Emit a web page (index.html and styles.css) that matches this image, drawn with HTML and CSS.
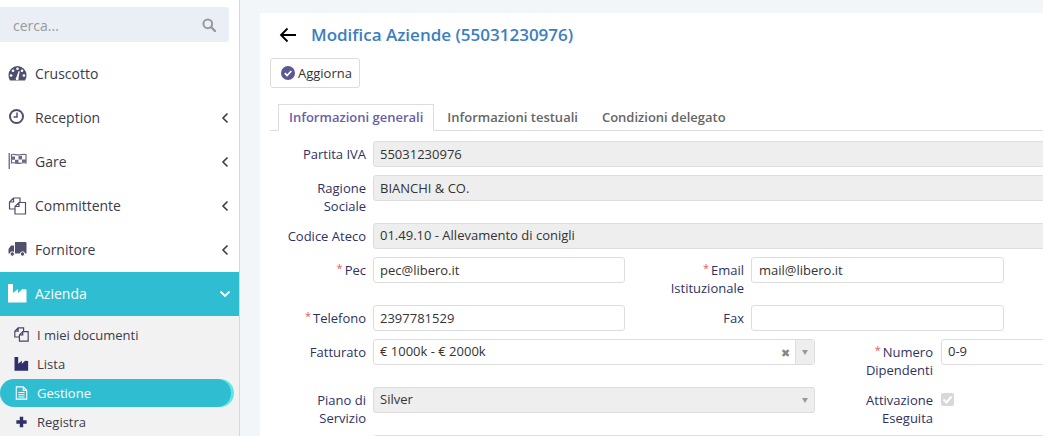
FILE: index.html
```html
<!DOCTYPE html>
<html lang="it">
<head>
<meta charset="utf-8">
<title>Modifica Aziende</title>
<link rel="stylesheet" href="styles.css">
</head>
<body>
<aside class="sidebar">
  <div class="search">
    <span class="search-text">cerca...</span>
    <svg class="search-icon" viewBox="0 0 14 14" width="14" height="14"><circle cx="5.800" cy="5.800" r="4.400" fill="none" stroke="currentColor" stroke-width="2"/><path d="M9 9l4 4" stroke="currentColor" stroke-width="2.400" stroke-linecap="round"/></svg>
  </div>
  <nav class="menu">
    <div class="item">
      <svg class="icon" viewBox="0 0 18 15" width="18" height="15"><path fill="currentColor" d="M9 0a9 9 0 0 0-9 9c0 2.200.5 4 1.500 5.500h15A9 9 0 0 0 18 9a9 9 0 0 0-9-9z"/><g fill="#fff"><circle cx="9" cy="2.800" r="1.300"/><circle cx="4.500" cy="4.800" r="1.300"/><circle cx="13.500" cy="4.800" r="1.300"/><circle cx="2.600" cy="9.500" r="1.300"/><circle cx="15.400" cy="9.500" r="1.300"/><path d="M7.800 11.500l2.400-6.500 1 .4L10 12A1.500 1.500 0 1 1 7.800 11.500z"/></g></svg>
      <span class="item-text">Cruscotto</span>
    </div>
    <div class="item">
      <svg class="icon" viewBox="0 0 18 17" width="18" height="17"><circle cx="8" cy="7.500" r="6.500" fill="none" stroke="currentColor" stroke-width="2"/><path d="M8.500 3.500v4.500H5" fill="none" stroke="currentColor" stroke-width="1.500"/></svg>
      <span class="item-text">Reception</span>
      <svg class="chev" viewBox="0 0 8 12" width="8" height="12"><path d="M6.500 1.500L2 6l4.500 4.500" fill="none" stroke="currentColor" stroke-width="1.600"/></svg>
    </div>
    <div class="item">
      <svg class="icon icon-flag" viewBox="0 0 18 16" width="18" height="16"><path fill="#7a7a98" d="M0 0h1.500v16H0z"/><path d="M3 1.500c3-1 5 1 8 .3s4-.8 6.500-.3v8.500c-2.500-.5-4-.3-6.500.3s-5-1.300-8-.3z" fill="#fff" stroke="currentColor" stroke-width="1.200"/><path fill="currentColor" d="M3 3.500h3.500v3.200H3zM6.500 6.700H10v3.200H6.500zM10 3h3.500v3.500H10zM13.500 6.500h4v3h-4z"/></svg>
      <span class="item-text">Gare</span>
      <svg class="chev" viewBox="0 0 8 12" width="8" height="12"><path d="M6.500 1.500L2 6l4.500 4.500" fill="none" stroke="currentColor" stroke-width="1.600"/></svg>
    </div>
    <div class="item">
      <svg class="icon" viewBox="0 0 18 18" width="18" height="18"><path d="M6.500 12H1V5L5 1H11.500V5.500M6.500 17V9.500L10.500 5.500H17V17zM10.500 6V9.500H7M5 1.500V5H1.500" fill="none" stroke="currentColor" stroke-width="1.200"/></svg>
      <span class="item-text">Committente</span>
      <svg class="chev" viewBox="0 0 8 12" width="8" height="12"><path d="M6.500 1.500L2 6l4.500 4.500" fill="none" stroke="currentColor" stroke-width="1.600"/></svg>
    </div>
    <div class="item">
      <svg class="icon" viewBox="0 0 18 15" width="18" height="15"><path fill="currentColor" d="M6.500 0H17a1 1 0 0 1 1 1v10.500H6.500zM0 7l2.500-3.500h3V11.500H0z"/><circle cx="3.800" cy="12" r="2.200" fill="currentColor" stroke="#fff"/><circle cx="14" cy="12" r="2.200" fill="currentColor" stroke="#fff"/></svg>
      <span class="item-text">Fornitore</span>
      <svg class="chev" viewBox="0 0 8 12" width="8" height="12"><path d="M6.500 1.500L2 6l4.500 4.500" fill="none" stroke="currentColor" stroke-width="1.600"/></svg>
    </div>
    <div class="item item-active">
      <svg class="icon" viewBox="0 0 19 19" width="19" height="19"><path fill="currentColor" d="M0 0h5v9l5-4v4l4.500-4 4 .5V18.500H0z"/></svg>
      <span class="item-text">Azienda</span>
      <svg class="chev chev-down" viewBox="0 0 12 8" width="12" height="8"><path d="M1.500 1.500L6 6l4.500-4.500" fill="none" stroke="currentColor" stroke-width="1.800"/></svg>
    </div>
    <div class="submenu">
      <div class="sub">
        <svg class="sub-icon" viewBox="0 0 18 18" width="15" height="15"><path d="M6.500 12H1V5L5 1H11.500V5.500M6.500 17V9.500L10.500 5.500H17V17zM10.500 6V9.500H7M5 1.500V5H1.500" fill="none" stroke="currentColor" stroke-width="1.400"/></svg>
        <span>I miei documenti</span>
      </div>
      <div class="sub">
        <svg class="sub-icon sub-dark" viewBox="0 0 19 19" width="15" height="14"><path fill="currentColor" d="M0 0h5v9l5-4v4l4.500-4 4 .5V18.500H0z"/></svg>
        <span>Lista</span>
      </div>
      <div class="sub sub-active">
        <svg class="sub-icon" viewBox="0 0 14 16" width="13" height="14"><path d="M1 1h8l4 4v10H1zM9 1v4h4M3.500 7.500h7M3.500 10h7M3.500 12.500h7" fill="none" stroke="currentColor" stroke-width="1.200"/></svg>
        <span>Gestione</span>
      </div>
      <div class="sub">
        <svg class="sub-icon sub-dark" viewBox="0 0 14 14" width="12" height="12"><path fill="currentColor" d="M5 1h4v4h4v4H9v4H5V9H1V5h4z"/></svg>
        <span>Registra</span>
      </div>
    </div>
  </nav>
</aside>

<main class="main">
  <section class="card">
    <header class="head">
      <svg class="back" viewBox="0 0 18 16" width="18" height="16"><path d="M17 8H2M8.500 1.500L2 8l6.500 6.500" fill="none" stroke="#000" stroke-width="1.800"/></svg>
      <h1 class="title">Modifica Aziende (55031230976)</h1>
    </header>
    <button class="btn" type="button">
      <svg viewBox="0 0 14 14" width="14" height="14"><circle cx="7" cy="7" r="7" fill="#5b5794"/><path d="M3.800 7.200l2.300 2.300 4.200-4.500" fill="none" stroke="#fff" stroke-width="1.800"/></svg>
      Aggiorna
    </button>
    <div class="tabs">
      <span class="tab tab-active">Informazioni generali</span>
      <span class="tab">Informazioni testuali</span>
      <span class="tab">Condizioni delegato</span>
    </div>
    <div class="form">
      <div class="row">
        <label class="label">Partita IVA</label>
        <div class="input input-full disabled">55031230976</div>
      </div>
      <div class="row">
        <label class="label">Ragione Sociale</label>
        <div class="input input-full disabled">BIANCHI &amp; CO.</div>
      </div>
      <div class="row">
        <label class="label">Codice Ateco</label>
        <div class="input input-full input-tight disabled">01.49.10 - Allevamento di conigli</div>
      </div>
      <div class="row">
        <label class="label"><span class="req">*</span>Pec</label>
        <div class="input input-half">pec@libero.it</div>
        <label class="label label-second"><span class="req">*</span>Email Istituzionale</label>
        <div class="input input-second">mail@libero.it</div>
      </div>
      <div class="row">
        <label class="label"><span class="req">*</span>Telefono</label>
        <div class="input input-half">2397781529</div>
        <label class="label label-second">Fax</label>
        <div class="input input-second"></div>
      </div>
      <div class="row">
        <label class="label">Fatturato</label>
        <div class="input input-tight select">
          <span class="select-value">€ 1000k - € 2000k</span>
          <span class="clear">✖</span>
          <span class="caret-box"><span class="caret"></span></span>
        </div>
        <label class="label label-third"><span class="req">*</span>Numero Dipendenti</label>
        <div class="input input-tight input-end">0-9</div>
      </div>
      <div class="row">
        <label class="label">Piano di Servizio</label>
        <div class="input input-tight select disabled">
          <span class="select-value">Silver</span>
          <span class="caret-box caret-plain"><span class="caret"></span></span>
        </div>
        <label class="label label-third">Attivazione Eseguita</label>
        <span class="check"><svg viewBox="0 0 13 13" width="13" height="13"><path d="M2.500 6.500l3 3 5-6" fill="none" stroke="#fff" stroke-width="2"/></svg></span>
      </div>
      <div class="row">
        <label class="label"></label>
        <div class="input input-full"></div>
      </div>
    </div>
  </section>
</main>
</body>
</html>
```

FILE: styles.css
```css
* { box-sizing: border-box; }
html, body { height: 436px; }
body {
  margin: 0;
  display: flex;
  overflow: hidden;
  background: #f3f6f9;
  font-family: "Open Sans", sans-serif;
  font-size: 13px;
  color: #333;
}
.sidebar {
  width: 240px;
  flex: none;
  height: 436px;
  overflow: hidden;
  background: #fff;
  border-right: 1px solid #d5d7db;
  padding-top: 7px;
}
.search {
  width: 229px;
  height: 35px;
  display: flex;
  align-items: center;
  justify-content: space-between;
  padding: 1px 13px 0 13px;
  background: #e9eff5;
  border-radius: 0 3px 3px 0;
  color: #999;
  font-size: 14px;
}
.search-icon { color: #999; }
.menu { margin-top: 10px; }
.item {
  height: 44px;
  display: flex;
  align-items: center;
  padding: 0 10px 0 8px;
  font-size: 14px;
  color: #3b3b4b;
}
.icon { width: 19px; flex: none; margin-right: 8px; color: #50506e; margin-top: -1px; }
.icon-flag { color: #6a6a88; margin-top: -3px; }
.item-text { flex: 1; margin-top: -2px; }
.chev { color: #3b3b4b; flex: none; }
.item-active { background: #2fbdd1; color: #fff; }
.item-active .icon, .item-active .chev { color: #fff; }
.chev-down { margin-right: -2px; }
.submenu { background: #f2f2f2; height: 120px; padding-top: 5px; }
.sub {
  height: 29px;
  display: flex;
  align-items: center;
  padding: 0 0 2px 14px;
  color: #3b3b4b;
  font-size: 13px;
}
.sub-icon { width: 15px; flex: none; margin-right: 8px; color: #45456a; }
.sub-dark { color: #2f2f6a; }
.sub-active {
  width: 231px;
  height: 28px;
  margin: 0 0 1px;
  padding-bottom: 0;
  background: #2fbdd1;
  color: #fff;
  border-radius: 14px;
  box-shadow: 3px 0 0 0 #5fe8e0;
}
.sub-active .sub-icon { color: #fff; }

.main { flex: 1; min-width: 0; padding: 13px 0 0 20px; }
.card {
  width: 900px;
  height: 430px;
  background: #fff;
  padding: 11px 0 0 10px;
}
.head { display: flex; align-items: center; height: 22px; padding-left: 9px; }
.back { flex: none; margin-right: 14px; }
.title {
  margin: 0;
  font-size: 17px;
  font-weight: 600;
  color: #3c7ebf;
  line-height: 22px;
}
.btn {
  display: flex;
  align-items: center;
  gap: 3px;
  height: 30px;
  width: 90px;
  margin-top: 12px;
  padding: 0 0 0 10px;
  background: #fff;
  border: 1px solid #dcdcdc;
  border-radius: 3px;
  font: 13px "Open Sans", sans-serif;
  color: #333;
}
.tabs {
  display: flex;
  height: 27px;
  margin-top: 16px;
  padding-left: 8px;
  border-bottom: 1px solid #ddd;
}
.tab {
  height: 27px;
  padding: 2px 11px 0;
  font-weight: 600;
  color: #666;
  line-height: 20px;
  border: 1px solid transparent;
}
.tab-active {
  padding: 2px 10px 0;
  color: #6a5ea8;
  background: #fff;
  border-color: #ddd #ddd #fff;
  margin-right: 1px;
}
.form { margin-top: 10px; }
.row { display: flex; align-items: flex-start; margin-bottom: 8px; }
.label {
  flex: none;
  width: 86px;
  margin: 0 7px 0 10px;
  padding-top: 4px;
  text-align: right;
  line-height: 18px;
  color: #2f3163;
  font-size: 13px;
}
.label-second { margin-left: 33px; }
.label-third { margin-left: 32px; margin-right: 8px; }
.req { color: #e45a5a; font-size: 11px; line-height: 0; vertical-align: 3px; margin-right: 2px; }
.input {
  flex: none;
  height: 26px;
  padding: 0 6px;
  border: 1px solid #ddd;
  border-radius: 3px;
  background: #fff;
  line-height: 24px;
  color: #333;
  font-size: 13px;
}
.input-tight { line-height: 22px; }
.input-full { width: 800px; }
.input-half { width: 252px; }
.input-second { width: 253px; padding-left: 7px; }
.input-end { width: 200px; }
.disabled { background: #eee; }
.select { width: 442px; display: flex; padding-right: 0; }
.select-value { flex: 1; }
.clear { font-size: 11px; color: #888; margin-right: 5px; line-height: 26px; }
.caret-box {
  width: 19px;
  display: flex;
  align-items: center;
  justify-content: center;
  background: #eee;
  border-left: 1px solid #ddd;
  border-radius: 0 3px 3px 0;
}
.caret-plain { background: transparent; border-left: 0; }
.caret { border: 3px solid transparent; border-top: 5px solid #999; border-bottom: 0; }
.check {
  flex: none;
  width: 13px;
  height: 13px;
  margin-top: 6px;
  background: #d8d8d8;
  border-radius: 2px;
  display: flex;
}
```
